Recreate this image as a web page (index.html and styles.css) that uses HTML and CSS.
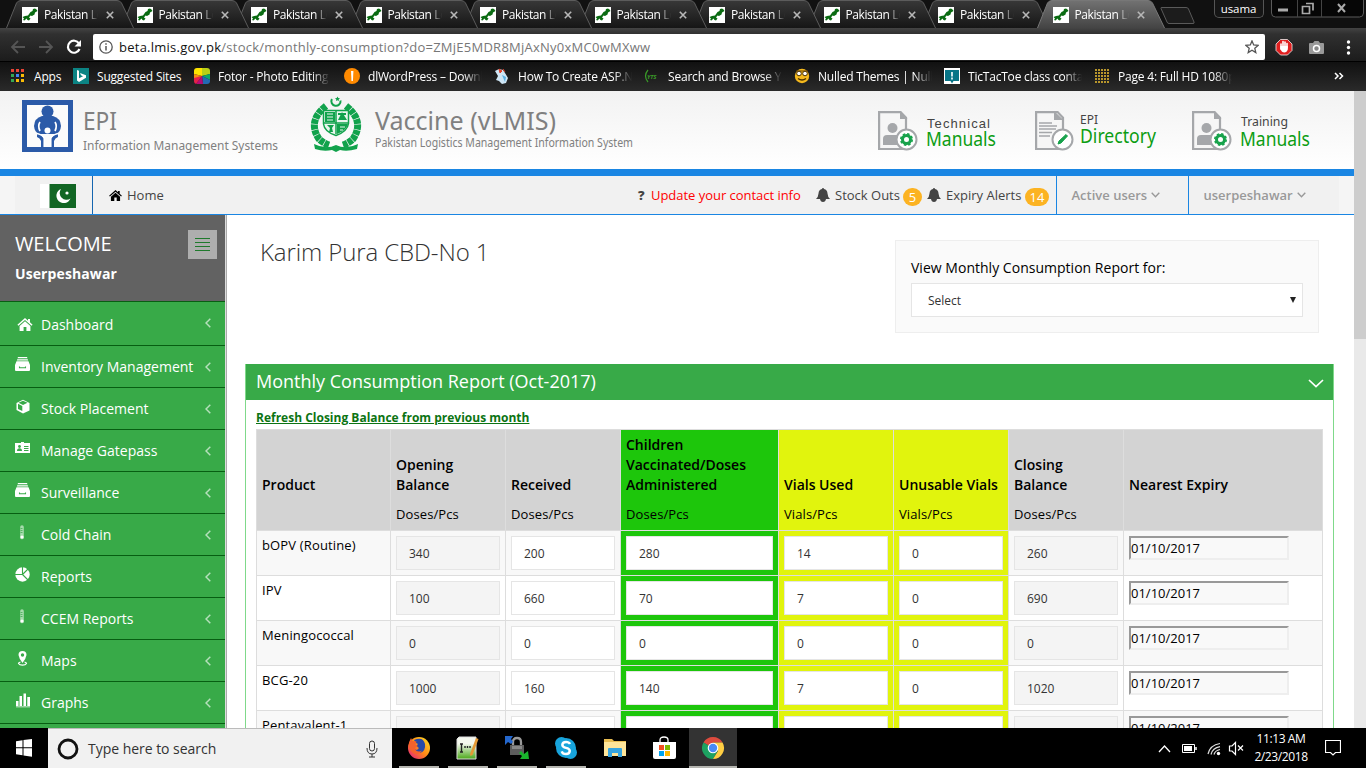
FILE: index.html
```html
<!DOCTYPE html>
<html lang="en">
<head>
<meta charset="utf-8">
<title>Pakistan Logistics Management Information System</title>
<link rel="stylesheet" href="styles.css">
</head>
<body>
<svg class="defs" width="0" height="0">
  <symbol id="tab-shape" viewBox="0 0 128 28"><path d="M0.5 28 L10.5 3 Q12 .5 15 .5 H111 Q114 .5 115.500 3 L127.500 28" fill="url(#tabg)" stroke="#5c5c5c"/></symbol>
  <symbol id="tab-on" viewBox="0 0 128 28"><path d="M0.500 28 L10.500 3 Q12 .5 15 .5 H111 Q114 .5 115.500 3 L127.500 28" fill="url(#tabon)" stroke="#777"/></symbol>
  <linearGradient id="tabg" x1="0" y1="0" x2="0" y2="1"><stop offset="0" stop-color="#383838"/><stop offset="1" stop-color="#161616"/></linearGradient>
  <linearGradient id="tabon" x1="0" y1="0" x2="0" y2="1"><stop offset="0" stop-color="#727272"/><stop offset="1" stop-color="#444"/></linearGradient>
  <linearGradient id="ff" x1="1" y1="0" x2="0" y2="1"><stop offset="0" stop-color="#ffe226"/><stop offset=".5" stop-color="#ff8a16"/><stop offset="1" stop-color="#e31587"/></linearGradient>
  <linearGradient id="np" x1="0" y1="0" x2="0" y2="1"><stop offset=".3" stop-color="#f4f8ee"/><stop offset="1" stop-color="#4aa818"/></linearGradient>
  <symbol id="fav" viewBox="0 0 16 16"><path d="M0 0h16v16H0z" fill="#fff"/><path d="M11 2l2-.5 1.500 1 1 1.500-2.500 1.500-.5 2-2.500 1.500-1.500-.5L7 10.500l1.500 1-1.500 2-1.500-.5-1-1.500L2.500 13.500 1 13l1-1.500L.5 10 3 9l3-.5L8.500 5l2-1z" fill="#0a6b12"/></symbol>
  <symbol id="x" viewBox="0 0 8 8"><path d="M.8.8l6.400 6.400M7.200.8.8 7.200" stroke="#b8b8b8" stroke-width="1.600"/></symbol>
  <symbol id="bell" viewBox="0 0 14 14"><path d="M7 0q1 0 1 1 3.300.7 3.500 4.500.2 3.500 2.500 5.500H0Q2.300 9 2.500 5.500 2.700 1.700 6 1q0-1 1-1zM4 11h6Q9.500 14 7 14T4 11z" fill="#444"/></symbol>
  <symbol id="home" viewBox="0 0 14 12"><path d="M7 0 9.800 2.500V1h1.800v3L14 6.200l-.9 1L7 1.900.9 7.200 0 6.200zM7 3l5 4.300V12H8.300V8.300H5.700V12H2V7.300z"/></symbol>
  <symbol id="down" viewBox="0 0 9 6"><path d="M.7.8 4.500 4.700 8.300.8" fill="none" stroke="currentColor" stroke-width="1.400"/></symbol>
  <symbol id="left" viewBox="0 0 6 10"><path d="M5.300.7 1 5l4.300 4.300" fill="none" stroke="currentColor" stroke-width="1.500"/></symbol>
  <symbol id="drawer" viewBox="0 0 15 14"><path d="M3 0h9l.5 1.300h-10zM2.300 2.200h10.400l.5 1.200H1.800zM1.500 4.300h12L15 8v5q0 1-1 1H1q-1 0-1-1V8z" fill="#fff"/><path d="M4.500 9.500v1.300h6V9.500" fill="none" stroke="#38aa48" stroke-width="1.100"/></symbol>
  <symbol id="thermo" viewBox="0 0 15 15"><path d="M5.200 2q0-1.700 1.800-1.700T8.800 2v8.500q1 3.500-1.800 3.700-2.800-.2-1.800-3.700z" fill="#a6dbad"/><path d="M5.500 3.500h2M5.500 5.500h2M5.500 7.500h2" stroke="#56b765"/><circle cx="7" cy="12" r="1.500" fill="#fff"/></symbol>
  <symbol id="person-doc" viewBox="0 0 40 40"><path d="M1.100 1.100h21.500L28 6.700V38H1.100z" fill="#f6f6f6" stroke="#a5a7aa" stroke-width="2.200"/><path d="M22 0v8h7.500z" fill="#a5a7aa"/><circle cx="14.500" cy="17" r="5" fill="#a5a7aa"/><path d="M5 34v-6q0-4 4-4h11q3 0 3 3v7z" fill="#a5a7aa"/><circle cx="28.500" cy="28.500" r="10" fill="#fff" stroke="#a5a7aa" stroke-width="2"/><circle cx="28.500" cy="28.500" r="4" fill="none" stroke="#17a24b" stroke-width="3"/><circle cx="28.500" cy="28.500" r="5.700" fill="none" stroke="#17a24b" stroke-width="1.600" stroke-dasharray="2.500 1.970"/></symbol>
</svg>

<div class="tabs">
  <div class="tab z9"><svg class="shape"><use href="#tab-shape"/></svg><svg class="fav"><use href="#fav"/></svg><span>Pakistan Lo</span><svg class="x"><use href="#x"/></svg></div>
  <div class="tab z8"><svg class="shape"><use href="#tab-shape"/></svg><svg class="fav"><use href="#fav"/></svg><span>Pakistan Lo</span><svg class="x"><use href="#x"/></svg></div>
  <div class="tab z7"><svg class="shape"><use href="#tab-shape"/></svg><svg class="fav"><use href="#fav"/></svg><span>Pakistan Lo</span><svg class="x"><use href="#x"/></svg></div>
  <div class="tab z6"><svg class="shape"><use href="#tab-shape"/></svg><svg class="fav"><use href="#fav"/></svg><span>Pakistan Lo</span><svg class="x"><use href="#x"/></svg></div>
  <div class="tab z5"><svg class="shape"><use href="#tab-shape"/></svg><svg class="fav"><use href="#fav"/></svg><span>Pakistan Lo</span><svg class="x"><use href="#x"/></svg></div>
  <div class="tab z4"><svg class="shape"><use href="#tab-shape"/></svg><svg class="fav"><use href="#fav"/></svg><span>Pakistan Lo</span><svg class="x"><use href="#x"/></svg></div>
  <div class="tab z3"><svg class="shape"><use href="#tab-shape"/></svg><svg class="fav"><use href="#fav"/></svg><span>Pakistan Lo</span><svg class="x"><use href="#x"/></svg></div>
  <div class="tab z2"><svg class="shape"><use href="#tab-shape"/></svg><svg class="fav"><use href="#fav"/></svg><span>Pakistan Lo</span><svg class="x"><use href="#x"/></svg></div>
  <div class="tab z1"><svg class="shape"><use href="#tab-shape"/></svg><svg class="fav"><use href="#fav"/></svg><span>Pakistan Lo</span><svg class="x"><use href="#x"/></svg></div>
  <div class="tab active"><svg class="shape"><use href="#tab-on"/></svg><svg class="fav"><use href="#fav"/></svg><span>Pakistan Lo</span><svg class="x"><use href="#x"/></svg></div>
  <svg class="newtab" width="36" height="18"><path d="M1 1.500Q.5.500 2 .5H26q2 0 2.500 1.500L34 15q.6 1.500-1 1.500H9Q7.500 16.500 7 15z" fill="#1c1c1c" stroke="#5a5a5a"/></svg>
  <div class="user">usama</div>
  <svg class="winbtns" width="94" height="18"><path d="M.5 0v13q0 4 4 4h84q4 0 4-4V0" fill="#060606" stroke="#5a5a5a"/><path d="M26.500 0v17M50.500 0v17" stroke="#444"/><path d="M7 8.500h10v3H7z" fill="#aaa"/><path d="M35 3.500h7v7M31.500 6.500h7v7h-7z" fill="none" stroke="#aaa" stroke-width="1.700"/><path d="M67 4l7 8M74 4l-7 8" stroke="#aaa" stroke-width="2"/></svg>
</div>

<div class="toolbar">
  <svg width="93" height="33"><g fill="none" stroke="#555" stroke-width="1.800"><path d="M25 19H12.500M18 13l-6 6 6 6M39 19h12.500M46 13l6 6-6 6"/></g><path d="M79 15.500A6 6 0 1 0 79.500 21" fill="none" stroke="#fff" stroke-width="2.200"/><path d="M81 12v6.500h-6.500z" fill="#fff"/></svg>
  <div class="omni">
    <svg width="14" height="14"><circle cx="7" cy="7" r="6.200" fill="none" stroke="#555" stroke-width="1.300"/><path d="M7 6v4.500M7 3.200v1.600" stroke="#555" stroke-width="1.500"/></svg>
    <span class="url"><b>beta.lmis.gov.pk</b>/stock/monthly-consumption?do=ZMjE5MDR8MjAxNy0xMC0wMXww</span>
    <svg class="star" width="14" height="14"><path d="M7 .9 8.700 5l4.400.4-3.300 2.900 1 4.300L7 10.300l-3.800 2.300 1-4.300L.9 5.400 5.300 5z" fill="none" stroke="#555" stroke-width="1.300"/></svg>
  </div>
  <svg width="101" height="33"><path d="M15.500 11.500h7l4.500 4.500v6.500l-4.500 4.500h-7L11 22.500V16z" fill="#e02020" stroke="#eee" stroke-width=".8"/><path d="M16 21v-5M18 20v-6.500M20 20v-6M22 20v-4.500" stroke="#fff" stroke-width="1.600" stroke-linecap="round"/><path d="M15.300 18h7.500v3.500q-1 3-3.500 3T15.300 21z" fill="#fff"/><path d="M45 15h3l1.500-2h4l1.500 2h3q1 0 1 1v9q0 1-1 1H45q-1 0-1-1v-9q0-1 1-1z" fill="#999"/><circle cx="51.500" cy="20.500" r="3" fill="#888" stroke="#fff" stroke-width="1.500"/><g fill="#fff"><circle cx="83.500" cy="14" r="1.700"/><circle cx="83.500" cy="19.500" r="1.700"/><circle cx="83.500" cy="25" r="1.700"/></g></svg>
</div>

<div class="marks">
  <div class="mark m1"><svg width="16" height="16"><g><path d="M1 1h3v3H1zM6 1h3v3H6zM11 1h3v3h-3z" fill="#ea4335"/><path d="M1 6h3v3H1zM1 11h3v3H1z" fill="#34a853"/><path d="M6 6h3v3H6z" fill="#4285f4"/><path d="M11 6h3v3h-3zM6 11h3v3H6zM11 11h3v3h-3z" fill="#fbbc05"/></g></svg><span>Apps</span></div>
  <div class="mark m2"><svg width="16" height="16"><path d="M0 0h16v16H0z" fill="#0c8484"/><path d="M4 2l2 .8v7.500l4-2-2-1-1-2.300 6 2.200v2.500L6 14l-2-1.500z" fill="#fff"/></svg><span>Suggested Sites</span></div>
  <div class="mark m3"><svg width="16" height="16"><defs><clipPath id="rd"><rect width="16" height="16" rx="3"/></clipPath></defs><g clip-path="url(#rd)"><path d="M8 8V0H0v6z" fill="#fde300"/><path d="M8 8V0h8v6z" fill="#b9cf16"/><path d="M8 8l8-2v6z" fill="#0aa86b"/><path d="M8 8l8 4v4H9z" fill="#2269b5"/><path d="M8 8l1 8H2z" fill="#b40a78"/><path d="M8 8l-6 8H0V9z" fill="#e5204b"/><path d="M8 8 0 6v4z" fill="#f78b12"/></g></svg><span>Fotor - Photo Editing</span></div>
  <div class="mark m4"><svg width="16" height="16"><circle cx="8" cy="8" r="8" fill="#ff8a00"/><path d="M7 3h2.400l-.5 10H7.500z" fill="#fff"/></svg><span>dlWordPress – Downl</span></div>
  <div class="mark m5"><svg width="16" height="16"><path d="M1 3l4-2 4 1 2 3 3 5-2 5-4 1-3-3-3-1 2-4z" fill="#cfe6f5"/><path d="M5 1l3 2-2 2zM9 1l2 3" fill="#e0432c" stroke="#e0432c"/><path d="M8 7l4 2-1 5" fill="#5cb2e4"/></svg><span>How To Create ASP.N</span></div>
  <div class="mark m6"><svg width="16" height="16"><path d="M4 2Q-1 8 4 14" fill="none" stroke="#3a9a28" stroke-width="1.200"/><text x="3" y="11" class="yts">YTS</text></svg><span>Search and Browse YI</span></div>
  <div class="mark m7"><svg width="16" height="16"><circle cx="8" cy="8" r="7.200" fill="#f5b91d"/><path d="M2 3h12" stroke="#6b4300"/><circle cx="5" cy="5.500" r="2.300" fill="#fff" stroke="#4b3000"/><circle cx="11" cy="5.500" r="2.300" fill="#fff" stroke="#4b3000"/><path d="M4 10.500q4 3 8 0" fill="none" stroke="#4b3000" stroke-width="1.500"/></svg><span>Nulled Themes | Nulle</span></div>
  <div class="mark m8"><svg width="16" height="16"><path d="M0 0h16v16H0z" fill="#fff"/><path d="M1 2h14v11H9.500L8 15.500 6.500 13H1z" fill="#087587"/><path d="M8 4v4.500M8 9.500v2" stroke="#fff" stroke-width="1.600"/></svg><span>TicTacToe class contai</span></div>
  <div class="mark m9"><svg width="16" height="16"><path d="M1 2h14M1 5h14M1 8h14M1 11h14M1 14h14" stroke="#b8962c" stroke-width="2" stroke-dasharray="2 1"/></svg><span>Page 4: Full HD 1080p</span></div>
  <svg class="more" width="10" height="8"><path d="M1 1l3 3-3 3M5.500 1l3 3-3 3" fill="none" stroke="#fff" stroke-width="1.500"/></svg>
</div>

<div class="page">
<div class="doc">
  <div class="head">
    <svg class="epi" width="262" height="78">
      <path d="M2.500 11.500h46v47h-46z" fill="#fbfbfb" stroke="#2b5aa8" stroke-width="5"/>
      <circle cx="25.500" cy="20.500" r="6" fill="#2b5aa8"/><path d="M20 25h11q7.500 2 8 10-.5 6-5 8H17q-4.500-2-5-8 .5-8 8-10z" fill="#2b5aa8"/><path d="M18 31q-2.500 4 0 9M33 31q2.500 4 0 9" fill="none" stroke="#fff" stroke-width="1.700"/><circle cx="25.500" cy="39.500" r="3" fill="#fff"/><path d="M15 42q5 2 6.500 5v9h8v-9q1.500-3 6.500-5v4q-3 1-4 4v6H19v-6q-1-3-4-4z" fill="#2b5aa8"/><path d="M15 42.500q6 1.500 7.500 5V56M36 42.500q-6 1.500-7.500 5V56" fill="none" stroke="#fff" stroke-width="1.300"/><path d="M23.500 46h4v10h-4z" fill="#fbfbfb"/>
      <text x="61" y="38.500" class="big" textLength="34" lengthAdjust="spacingAndGlyphs">EPI</text>
      <text x="61" y="59" class="sub1" textLength="195" lengthAdjust="spacingAndGlyphs">Information Management Systems</text>
    </svg>
    <svg class="vlmis" width="330" height="78">
      <g fill="none" stroke="#11a24c"><path d="M31.500 9.500a4.600 4.600 0 1 1-8.600-1.500" stroke-width="2"/><path d="M17 15Q-2 30 10 48 14 52 20 54M37 15Q56 30 44 48 40 52 34 54" stroke-width="7" stroke-dasharray="5 .6"/><path d="M14.500 19.500h25v13q-1 8-12.500 12Q15.500 41 14.500 33z" stroke-width="1.500" fill="#e9f6ee"/><path d="M27 20v23M15 32h24" stroke-width="1.500"/></g>
      <path d="M28 33h11q-2 7-11 10zM16 21h10v10H16z" fill="#11a24c"/><path d="M18 23h6M18 26h6M18 29h6M31 36h5M31 39h3" stroke="#e9f6ee"/><path d="M29 29l4-8 5 8zM29 22h8v2h-8zM18 34h7l-2 3 1 4h-4l1-4z" fill="#11a24c"/><path d="M28.500 5.500l.8 1.500 1.700.2-1.300 1.200.3 1.600-1.500-.8-1.500.8.3-1.600L26 7.200l1.700-.2z" fill="#11a24c"/>
      <path d="M5 53q12 6 22 1 10 5 22-1l-1 5q-10 3-17 1l-4 2-4-2q-8 2-17-1z" fill="#11a24c"/>
      <text x="66" y="38.500" class="big" textLength="181" lengthAdjust="spacingAndGlyphs">Vaccine (vLMIS)</text>
      <text x="66" y="56" class="sub2" textLength="258" lengthAdjust="spacingAndGlyphs">Pakistan Logistics Management Information System</text>
    </svg>
    <svg class="l1" width="125" height="78"><use href="#person-doc" x="1" y="20" width="40" height="40"/><text x="50" y="37" class="small" textLength="63">Technical</text><text x="49" y="55" class="green" textLength="70" lengthAdjust="spacingAndGlyphs">Manuals</text></svg>
    <svg class="l2" width="125" height="78"><g transform="translate(1 20)"><path d="M1.100 1.100h21.500L28 6.700V38H1.100z" fill="#f6f6f6" stroke="#a5a7aa" stroke-width="2.200"/><path d="M19 0v9h9.500z" fill="#a5a7aa"/><path d="M4 12h13M4 15h18M4 18h17M4 21.500h13M4 25h11" stroke="#a5a7aa" stroke-width="1.500"/><circle cx="27.500" cy="28.500" r="10" fill="#fff" stroke="#a5a7aa" stroke-width="2"/><path d="M23 33l1-3 7-6.500 1.500 1.500-6.500 7z" fill="#17a24b" stroke="#17a24b"/></g><text x="46" y="33" class="small2" textLength="18" lengthAdjust="spacingAndGlyphs">EPI</text><text x="46" y="52" class="green" textLength="76" lengthAdjust="spacingAndGlyphs">Directory</text></svg>
    <svg class="l3" width="125" height="78"><use href="#person-doc" x="1" y="20" width="40" height="40"/><text x="50" y="35" class="small2" textLength="47" lengthAdjust="spacingAndGlyphs">Training</text><text x="49" y="55" class="green" textLength="70" lengthAdjust="spacingAndGlyphs">Manuals</text></svg>
  </div>
  <div class="nav">
    <div class="flag"><svg width="36" height="24"><path d="M0 0h10v24H0z" fill="#fff"/><path d="M9.500 0H36v24H9.500z" fill="#126624"/><path d="M21 5a7.300 7.300 0 1 0 9.500 9.500A6.800 6.800 0 0 1 21 5z" fill="#fff"/><circle cx="27" cy="9" r="1.600" fill="#fff"/></svg></div>
    <svg class="nhome" width="13" height="11"><use href="#home"/></svg><span class="t-home">Home</span>
    <b class="q">?</b><span class="upd">Update your contact info</span>
    <svg class="bell" width="14" height="14"><use href="#bell"/></svg><span class="t-stock">Stock Outs</span><i class="badge b5">5</i>
    <svg class="bell bell2" width="14" height="14"><use href="#bell"/></svg><span class="t-exp">Expiry Alerts</span><i class="badge b14">14</i>
    <div class="menu mu1"><b>Active users</b><svg width="9" height="6"><use href="#down"/></svg></div>
    <div class="menu mu2"><b>userpeshawar</b><svg width="9" height="6"><use href="#down"/></svg></div>
  </div>
  <div class="cols">
    <div class="side">
      <div class="welcome"><div><h2>WELCOME</h2><strong>Userpeshawar</strong></div><div class="burger"><svg width="15" height="14"><path d="M0 .5h15M0 4.500h15M0 8.500h15M0 12.500h15" stroke="#1f7a2c"/></svg></div></div>
      <div class="item first"><svg width="20" height="15"><use href="#home" x="2" y="1" width="16" height="13" fill="#fff"/></svg><span>Dashboard</span><svg class="ch"><use href="#left"/></svg></div>
      <div class="item"><svg width="20" height="15"><use href="#drawer" width="15" height="14"/></svg><span>Inventory Management</span><svg class="ch"><use href="#left"/></svg></div>
      <div class="item"><svg width="20" height="15"><path d="M8 .7 14.500 4v7.500L8 14.500 1.500 11V4z" fill="#fff"/><path d="M3 4.800l4.300 2.300V12L3 10z M3.500 3.700 8 1.700l4.500 2L8 6z" fill="#38aa48"/></svg><span>Stock Placement</span><svg class="ch"><use href="#left"/></svg></div>
      <div class="item"><svg width="20" height="15"><path d="M0 2h6V1h3v1h6v10H0z" fill="#fff"/><circle cx="4.500" cy="5.500" r="1.400" fill="#38aa48"/><path d="M2 10q0-2.700 2.500-2.700T7 10z" fill="#38aa48"/><path d="M9 5.500h4.500M9 7.500h4.500M9 9.500h4.500" stroke="#38aa48"/></svg><span>Manage Gatepass</span><svg class="ch"><use href="#left"/></svg></div>
      <div class="item"><svg width="20" height="15"><use href="#drawer" width="15" height="14"/></svg><span>Surveillance</span><svg class="ch"><use href="#left"/></svg></div>
      <div class="item"><svg width="20" height="15"><use href="#thermo" width="15" height="15"/></svg><span>Cold Chain</span><svg class="ch"><use href="#left"/></svg></div>
      <div class="item"><svg width="20" height="15"><circle cx="7.500" cy="7.500" r="7.200" fill="#fff"/><path d="M7.500 0v7.500H0M7.500 7.500 13 2M7.500 7.500l5.500 5.500" fill="none" stroke="#38aa48" stroke-width="1.100"/></svg><span>Reports</span><svg class="ch"><use href="#left"/></svg></div>
      <div class="item"><svg width="20" height="15"><use href="#thermo" width="15" height="15"/></svg><span>CCEM Reports</span><svg class="ch"><use href="#left"/></svg></div>
      <div class="item"><svg width="20" height="15"><path d="M7.500 0a4 4 0 0 1 4 4Q11 7.500 7.500 12 4 7.500 3.500 4a4 4 0 0 1 4-4z" fill="#fff"/><circle cx="7.500" cy="4" r="1.700" fill="#38aa48"/><path d="M5.500 11q-2 .5-2 1.500 1 1.700 4 1.700t4-1.700q0-1-2-1.500" fill="none" stroke="#fff" stroke-width="1.200"/></svg><span>Maps</span><svg class="ch"><use href="#left"/></svg></div>
      <div class="item"><svg width="20" height="15"><path d="M1 8h2.500v5H1zM4.500 3H7v10H4.500zM8.500.5H11V13H8.500zM12.300 4H15v9h-2.700zM1 13.500h14v.8H1z" fill="#fff"/></svg><span>Graphs</span><svg class="ch"><use href="#left"/></svg></div>
      <div class="item"></div>
    </div>
    <div class="main">
      <div class="top">
        <h1>Karim Pura CBD-No 1</h1>
        <div class="filter"><label>View Monthly Consumption Report for:</label><div class="select"><span>Select</span><svg width="6" height="6"><path d="M0 0h6L3 6z" fill="#222"/></svg></div></div>
      </div>
      <div class="portlet">
        <div class="ptitle"><span>Monthly Consumption Report (Oct-2017)</span><svg width="16" height="9"><path d="M1 1l7 6.500L15 1" fill="none" stroke="#fff" stroke-width="1.700"/></svg></div>
        <div class="pbody">
          <a class="refresh">Refresh Closing Balance from previous month</a>
          <table>
            <colgroup><col class="w134"><col class="w115"><col class="w115"><col class="w158"><col class="w115"><col class="w115"><col class="w115"><col class="w199"></colgroup>
            <tr class="hd"><th>Product<p>&nbsp;</p></th><th>Opening<br>Balance<p>Doses/Pcs</p></th><th>Received<p>Doses/Pcs</p></th><th class="g">Children<br>Vaccinated/Doses<br>Administered<p>Doses/Pcs</p></th><th class="y">Vials Used<p>Vials/Pcs</p></th><th class="y">Unusable Vials<p>Vials/Pcs</p></th><th>Closing<br>Balance<p>Doses/Pcs</p></th><th>Nearest Expiry<p>&nbsp;</p></th></tr>
            <tr class="odd"><td>bOPV (Routine)</td><td><div class="in ro">340</div></td><td><div class="in">200</div></td><td class="g"><div class="in">280</div></td><td class="y"><div class="in">14</div></td><td class="y"><div class="in">0</div></td><td><div class="in ro">260</div></td><td><div class="date">01/10/2017</div></td></tr>
            <tr><td>IPV</td><td><div class="in ro">100</div></td><td><div class="in">660</div></td><td class="g"><div class="in">70</div></td><td class="y"><div class="in">7</div></td><td class="y"><div class="in">0</div></td><td><div class="in ro">690</div></td><td><div class="date">01/10/2017</div></td></tr>
            <tr class="odd"><td>Meningococcal</td><td><div class="in ro">0</div></td><td><div class="in">0</div></td><td class="g"><div class="in">0</div></td><td class="y"><div class="in">0</div></td><td class="y"><div class="in">0</div></td><td><div class="in ro">0</div></td><td><div class="date">01/10/2017</div></td></tr>
            <tr><td>BCG-20</td><td><div class="in ro">1000</div></td><td><div class="in">160</div></td><td class="g"><div class="in">140</div></td><td class="y"><div class="in">7</div></td><td class="y"><div class="in">0</div></td><td><div class="in ro">1020</div></td><td><div class="date">01/10/2017</div></td></tr>
            <tr class="odd"><td>Pentavalent-1</td><td><div class="in ro"></div></td><td><div class="in"></div></td><td class="g"><div class="in"></div></td><td class="y"><div class="in"></div></td><td class="y"><div class="in"></div></td><td><div class="in ro"></div></td><td><div class="date">01/10/2017</div></td></tr>
          </table>
        </div>
      </div>
    </div>
  </div>
</div>
<div class="scroll"><div class="thumb"></div></div>
</div>

<div class="task">
  <svg width="48" height="40"><path d="M16 13.300l6.500-1v7H16zM23.500 12.100l8.500-1.200v8.400h-8.500zM16 20.300h6.500v7L16 26.300zM23.500 20.300H32v8.400l-8.500-1.200z" fill="#fff"/></svg>
  <div class="search"><svg width="22" height="22"><circle cx="11" cy="11" r="9" fill="none" stroke="#111" stroke-width="2.800"/></svg><span>Type here to search</span><svg width="12" height="18"><rect x="3.500" y="1" width="5" height="10" rx="2.500" fill="none" stroke="#333"/><path d="M1 8q0 6 5 6t5-6M6 14v3M3 17h6" fill="none" stroke="#333"/></svg></div>
  <div class="app a0"><svg width="24" height="24"><circle cx="12" cy="12" r="11" fill="url(#ff)"/><path d="M7 4q9-4 11 4 1 7-5 9-5 0-6-4l3 1 2-2-3-2 2-2-2-1z" fill="#284aa8"/><path d="M1.500 10Q2 5 4 2l1.500 3 4 .5-1 3 2.500 1.500-3 2 1 2.500q3 2 6 0-3 5-8 3-4-2-5.500-7.500z" fill="#f5622c"/></svg></div>
  <div class="app"><svg width="24" height="24"><path d="M3 1h17v22H1V3z" fill="url(#np)" stroke="#ddd"/><path d="M5.500 8v8M4 8h3M9 10v2M11.500 10v2M14 10v2M4 16h3" stroke="#222" stroke-width="1.400"/><path d="M14 18 20 2l2.500 1-6 16-2 1z" fill="#e59a35"/></svg></div>
  <div class="app"><svg width="24" height="24"><path d="M8 10V6q0-4 4-4t4 4v4" fill="none" stroke="#999" stroke-width="2.300"/><path d="M5 9h14v10H5z" fill="#5d5d5d"/><path d="M7 10h10v3H7z" fill="#888"/><path d="M0 0h8L6 3l2 3-2 2-3-2-3 3z" fill="#2467cd"/><path d="M24 23h-9l2-3-3-3 2-2 3 3 4-3z" fill="#18b52c"/></svg></div>
  <div class="app"><svg width="24" height="24"><circle cx="7.500" cy="7.500" r="6.500" fill="#18a4dc"/><circle cx="16.500" cy="16.500" r="6.500" fill="#18a4dc"/><circle cx="12" cy="12" r="10" fill="#18a4dc"/><path d="M16 8q-1-2-4-2-3.500 0-3.700 2.800Q8.500 11 12 11.800t3.800 3Q15.500 18 12 18q-3.500 0-4.300-2.700" fill="none" stroke="#fff" stroke-width="2.400"/></svg></div>
  <div class="app off"><svg width="24" height="24"><path d="M1 3h8l2 2h12v15H1z" fill="#e9bd52"/><path d="M1 6h22v14H1z" fill="#ffe599"/><path d="M5 13q0-1 1-1h12q1 0 1 1v8h-4v-4H9v4H5z" fill="#37a5e0"/></svg></div>
  <div class="app off"><svg width="24" height="24"><path d="M1 6h23v15q0 2-2 2H3q-2 0-2-2z" fill="#fff"/><path d="M8 8V4q0-3 4-3t4 3v4" fill="none" stroke="#fff" stroke-width="1.300"/><path d="M7 9h5v5H7z" fill="#f25022"/><path d="M13 9h5v5h-5z" fill="#7fba00"/><path d="M7 15h5v5H7z" fill="#00a4ef"/><path d="M13 15h5v5h-5z" fill="#ffb900"/></svg></div>
  <div class="app chrome"><svg width="24" height="24"><path d="M12 12 2.470 6.500A11 11 0 0 1 21.530 6.500L12 6.500z" fill="#dd4b3e"/><path d="M12 12 2.470 6.500A11 11 0 0 0 12 23l5-8.500z" fill="#1da261"/><path d="M12 6.500h9.530A11 11 0 0 1 12 23l5-8z" fill="#ffce43"/><circle cx="12" cy="12" r="5.300" fill="#fff"/><circle cx="12" cy="12" r="4.200" fill="#4a8af4"/></svg></div>
  <svg class="tray" width="92" height="40"><path d="M2 24l5.500-6 5.500 6" fill="none" stroke="#fff" stroke-width="1.300"/><path d="M25.500 16.500h12v8h-12z" fill="none" stroke="#fff"/><path d="M27 18h8v5h-8z" fill="#fff"/><path d="M39 19v3" stroke="#fff" stroke-width="1.500"/><g fill="none" stroke="#ddd" stroke-width="1.200"><path d="M51 26Q53 17 63 15.500M54 26.500Q55.500 20 63 18.700M57 26.500q1-4 6-5"/></g><circle cx="61.500" cy="25.500" r="1.700" fill="#fff"/><path d="M72.500 18H75l3.500-3.500v12L75 23h-2.500z" fill="none" stroke="#fff" stroke-width="1.200"/><path d="M81 17.500l5 5M86 17.500l-5 5" stroke="#fff" stroke-width="1.200"/></svg>
  <div class="clock">11:13 AM<br>2/23/2018</div>
  <svg class="note" width="16" height="18"><path d="M.5 1.500h15v12h-5L8 16l-2.500-2.500h-5z" fill="none" stroke="#fff" stroke-width="1.200"/></svg>
</div>
</body>
</html>
```
FILE: styles.css
```css
* { box-sizing: border-box; }
body { margin: 0; width: 1366px; height: 768px; overflow: hidden; background: #fff; font-family: "Open Sans", sans-serif; font-size: 13px; color: #000; display: flex; flex-direction: column; }
svg { display: block; flex: none; }
.defs { position: absolute; }
span, b, i, strong, label { white-space: nowrap; }

/* browser frame */
.tabs { height: 28px; flex: none; background: #111; display: flex; padding-left: 6px; font: 12px "Open Sans", sans-serif; color: #fff; }
.tab { position: relative; isolation: isolate; width: 114.500px; flex: none; display: flex; align-items: flex-start; padding: 7px 0 0 16px; }
.shape { position: absolute; left: 0; top: 0; width: 128px; height: 28px; z-index: -1; }
.z9 { z-index: 9; } .z8 { z-index: 8; } .z7 { z-index: 7; } .z6 { z-index: 6; } .z5 { z-index: 5; }
.z4 { z-index: 4; } .z3 { z-index: 3; } .z2 { z-index: 2; } .z1 { z-index: 1; }
.active { z-index: 10; }
.fav { width: 16px; height: 16px; }
.tab span { width: 55px; margin-left: 6px; overflow: hidden; line-height: 16px; letter-spacing: -.4px; -webkit-mask-image: linear-gradient(90deg, #000 42px, transparent 54px); mask-image: linear-gradient(90deg, #000 42px, transparent 54px); }
.x { width: 8px; height: 8px; margin: 4px 0 0 7px; }
.newtab { margin: 7px 0 0 9px; }
.user { margin-left: 17.500px; width: 50px; height: 18px; border: 1px solid #555; border-top: 0; border-radius: 0 0 5px 5px; background: #151515; text-align: center; line-height: 17px; font-size: 11.500px; font-weight: 500; letter-spacing: -.1px; }
.winbtns { margin-left: 7px; }
.toolbar { height: 33px; flex: none; background: linear-gradient(#444 0, #303030 6px, #1c1c1c); display: flex; }
.omni { width: 1172px; height: 26px; margin-top: 6px; background: #fff; border-radius: 2px; display: flex; align-items: center; padding: 0 6px; }
.url { margin-left: 6px; font-size: 13px; color: #777; flex: 1; letter-spacing: .25px; }
.url b { font-weight: 400; color: #111; }
.marks { height: 30px; flex: none; border-top: 1px solid #000; background: linear-gradient(#111, #2a2a2a); display: flex; align-items: center; padding: 0 0 1px 10px; font-size: 12px; color: #fff; }
.mark { display: flex; gap: 8px; align-items: center; overflow: hidden; flex: none; letter-spacing: -.2px; }
.mark span { overflow: hidden; flex: 1; }
.m3 span, .m4 span, .m5 span, .m6 span, .m7 span, .m8 span, .m9 span { -webkit-mask-image: linear-gradient(90deg, #000 84%, transparent); mask-image: linear-gradient(90deg, #000 84%, transparent); }
.m1 { width: 55px; margin-right: 8px; } .m2 { width: 114px; margin-right: 7px; } .m3 { width: 136px; margin-right: 14px; }
.m4 { width: 138px; margin-right: 12px; } .m5 { width: 138px; margin-right: 12px; } .m6 { width: 138px; margin-right: 12px; }
.m7 { width: 138px; margin-right: 12px; } .m8 { width: 138px; margin-right: 12px; } .m9 { width: 138px; }
.more { margin-left: 102px; }
.yts { font: italic bold 6px "Open Sans", sans-serif; fill: #3a9a28; }

/* page */
.page { height: 637px; flex: none; display: flex; }
.doc { width: 1354px; height: 637px; overflow: hidden; }
.scroll { width: 12px; background: #e9e9e9; }
.thumb { height: 248px; background: #cdcdcd; }
.head { height: 85px; border-bottom: 7px solid #1a86e3; background: linear-gradient(#f2f2f2, #fff); display: flex; padding-left: 22px; }
.epi { margin-right: 25px; }
.vlmis { margin-right: 238px; }
.l1, .l2 { margin-right: 32px; }
.big { font: 26px "Noto Sans", sans-serif; fill: #808080; }
.sub1 { font: 13px "Noto Sans", sans-serif; fill: #808080; }
.sub2 { font: 12px "Noto Sans", sans-serif; fill: #808080; }
.small { font: 13px "Liberation Sans", sans-serif; fill: #444; }
.small2 { font: 13px "Noto Sans", sans-serif; fill: #444; }
.green { font: 19.500px "Noto Sans", sans-serif; fill: #0c9d13; }
.nav { height: 39px; border-bottom: 1px solid #1a86e3; background: linear-gradient(90deg, #f5f5f5 15px, #f1f1f1 15px, #f1f1f1 1339px, #f5f5f5 1339px); display: flex; align-items: center; color: #444; }
.flag { width: 93px; height: 38px; border-right: 1px solid #1566b0; padding: 8px 0 0 40px; }
.nhome { margin: 0 5px 0 16px; fill: #000; }
.t-home { width: 511px; }
.q { width: 13px; font-weight: 800; }
.upd { width: 165px; color: #f00; letter-spacing: -.03px; }
.bell { margin-right: 5px; }
.t-stock { width: 68px; }
.badge { height: 18px; margin-top: 3px; border-radius: 9px; background: #fcb322; color: #fff; font-style: normal; text-align: center; line-height: 18px; }
.b5 { width: 19px; } .b14 { width: 24px; }
.bell2 { margin-left: 5px; }
.t-exp { width: 79px; }
.menu { height: 38px; border-left: 1px solid #1a86e3; display: flex; align-items: center; gap: 4px; color: #999; padding-left: 14.500px; }
.menu b { font-weight: 600; }
.mu1 { margin-left: 7px; width: 132px; }
.cols { display: flex; height: 513px; }
.side { width: 227px; flex: none; border-right: 1px solid #aaa; box-shadow: inset -1px 0 #ddd; padding-right: 1px; }
.welcome { height: 87px; background: #626262; border-bottom: 1px solid #075e12; color: #fff; display: flex; justify-content: space-between; padding: 15px 8px 0 15px; }
.welcome h2 { margin: 0; font-size: 20px; line-height: 28px; font-weight: 400; letter-spacing: -.1px; }
.welcome strong { font-size: 14px; line-height: 32px; font-weight: 700; letter-spacing: .1px; }
.burger { width: 29px; height: 29px; background: #aeaeae; padding: 8px 7px; }
.item { height: 42px; background: #38aa48; border-bottom: 1px solid #075e12; color: #fff; display: flex; align-items: center; padding: 0 14px 0 15px; font-size: 14px; }
.item.first { height: 44px; }
.item span { flex: 1; padding: 0 0 0 6px; }
.item.first span { padding-top: 2px; }
.item > svg:first-child { margin-top: -4px; }
.item.first > svg:first-child { margin-top: 1px; }
.ch { width: 6px; height: 10px; color: #b5e0bb; }
.item.first .ch { margin-top: -2px; }
.main { flex: 1; padding: 25px 20px 0 18px; }
.top { display: flex; justify-content: space-between; height: 124px; padding: 0 15px; }
.top h1 { margin: -4px 0 0 0; font-size: 24px; line-height: 32px; font-weight: 300; color: #333; letter-spacing: -.1px; }
.filter { width: 424px; height: 93px; border: 1px solid #eee; background: #fafafa; padding: 17px 15px; }
.filter label { display: block; font-size: 14px; line-height: 20px; letter-spacing: .02px; }
.select { margin-top: 5px; height: 34px; border: 1px solid #e5e5e5; background: #fff; display: flex; justify-content: space-between; align-items: center; padding: 0 6px 0 16px; font-size: 12px; color: #333; }
.portlet { border: 1px solid #7fd98a; border-top: 0; height: 500px; }
.ptitle { height: 36px; background: #38aa48; color: #fff; display: flex; justify-content: space-between; align-items: center; padding: 0 9px 0 10px; font-size: 18px; }
.ptitle span { padding-bottom: 2px; }
.ptitle svg { margin-top: 2px; }
.pbody { padding: 8px 10px; }
.refresh { display: block; height: 21px; line-height: 20px; font-size: 12px; font-weight: 700; color: #0c7413; text-decoration: underline; }
table { width: 1067px; table-layout: fixed; border-collapse: collapse; }
.w134 { width: 134px; } .w115 { width: 115px; } .w158 { width: 158px; } .w199 { width: 199px; }
th, td { border: 1px solid #ddd; padding: 5px; vertical-align: top; text-align: left; white-space: nowrap; }
.hd { height: 101px; }
th { background: #d3d3d3; vertical-align: bottom; font-size: 14px; line-height: 20px; font-weight: 600; padding: 4px 5px 6px; }
th p { margin: 10px 0 0; font-size: 13px; font-weight: 400; line-height: 19px; letter-spacing: .1px; }
td { height: 45px; line-height: 20px; }
td:first-child { padding-top: 4px; letter-spacing: .15px; }
.odd td { background: #f8f8f8; }
th.g, .odd td.g, td.g { background: #1dc60b; }
th.y, .odd td.y, td.y { background: #e1f40d; }
.in { height: 34px; border: 1px solid #e5e5e5; background: #fff; padding-left: 12px; line-height: 34px; font-size: 12px; color: #333; }
.in.ro { background: #f4f4f4; }
.date { width: 160px; height: 24px; border: 2px solid #eee; border-top-color: #999; border-left-color: #999; background: #f9f9f9; font-size: 13px; line-height: 20px; }

/* desktop bar */
.task { height: 40px; flex: none; background: #000; display: flex; }
.search { width: 344px; background: #f1f1f1; border-top: 1px solid #bbb; display: flex; align-items: center; padding: 0 14px 0 9px; color: #333; font-size: 14px; }
.search span { flex: 1; margin-left: 9px; letter-spacing: -.03px; }
.app { width: 40px; margin-left: 9px; padding: 8px 0 0 8px; border-bottom: 2px solid #b5b5b0; }
.a0 { margin-left: 7px; }
.off { border-color: transparent; }
.chrome { width: 48px; margin-left: 5px; padding-left: 12px; background: #333; }
.tray { margin-left: 420px; }
.clock { width: 76px; margin-left: -6px; text-align: center; color: #fff; font-size: 12px; line-height: 18px; padding-top: 2px; letter-spacing: -.4px; }
.note { margin: 11px 0 0 6px; }
```
